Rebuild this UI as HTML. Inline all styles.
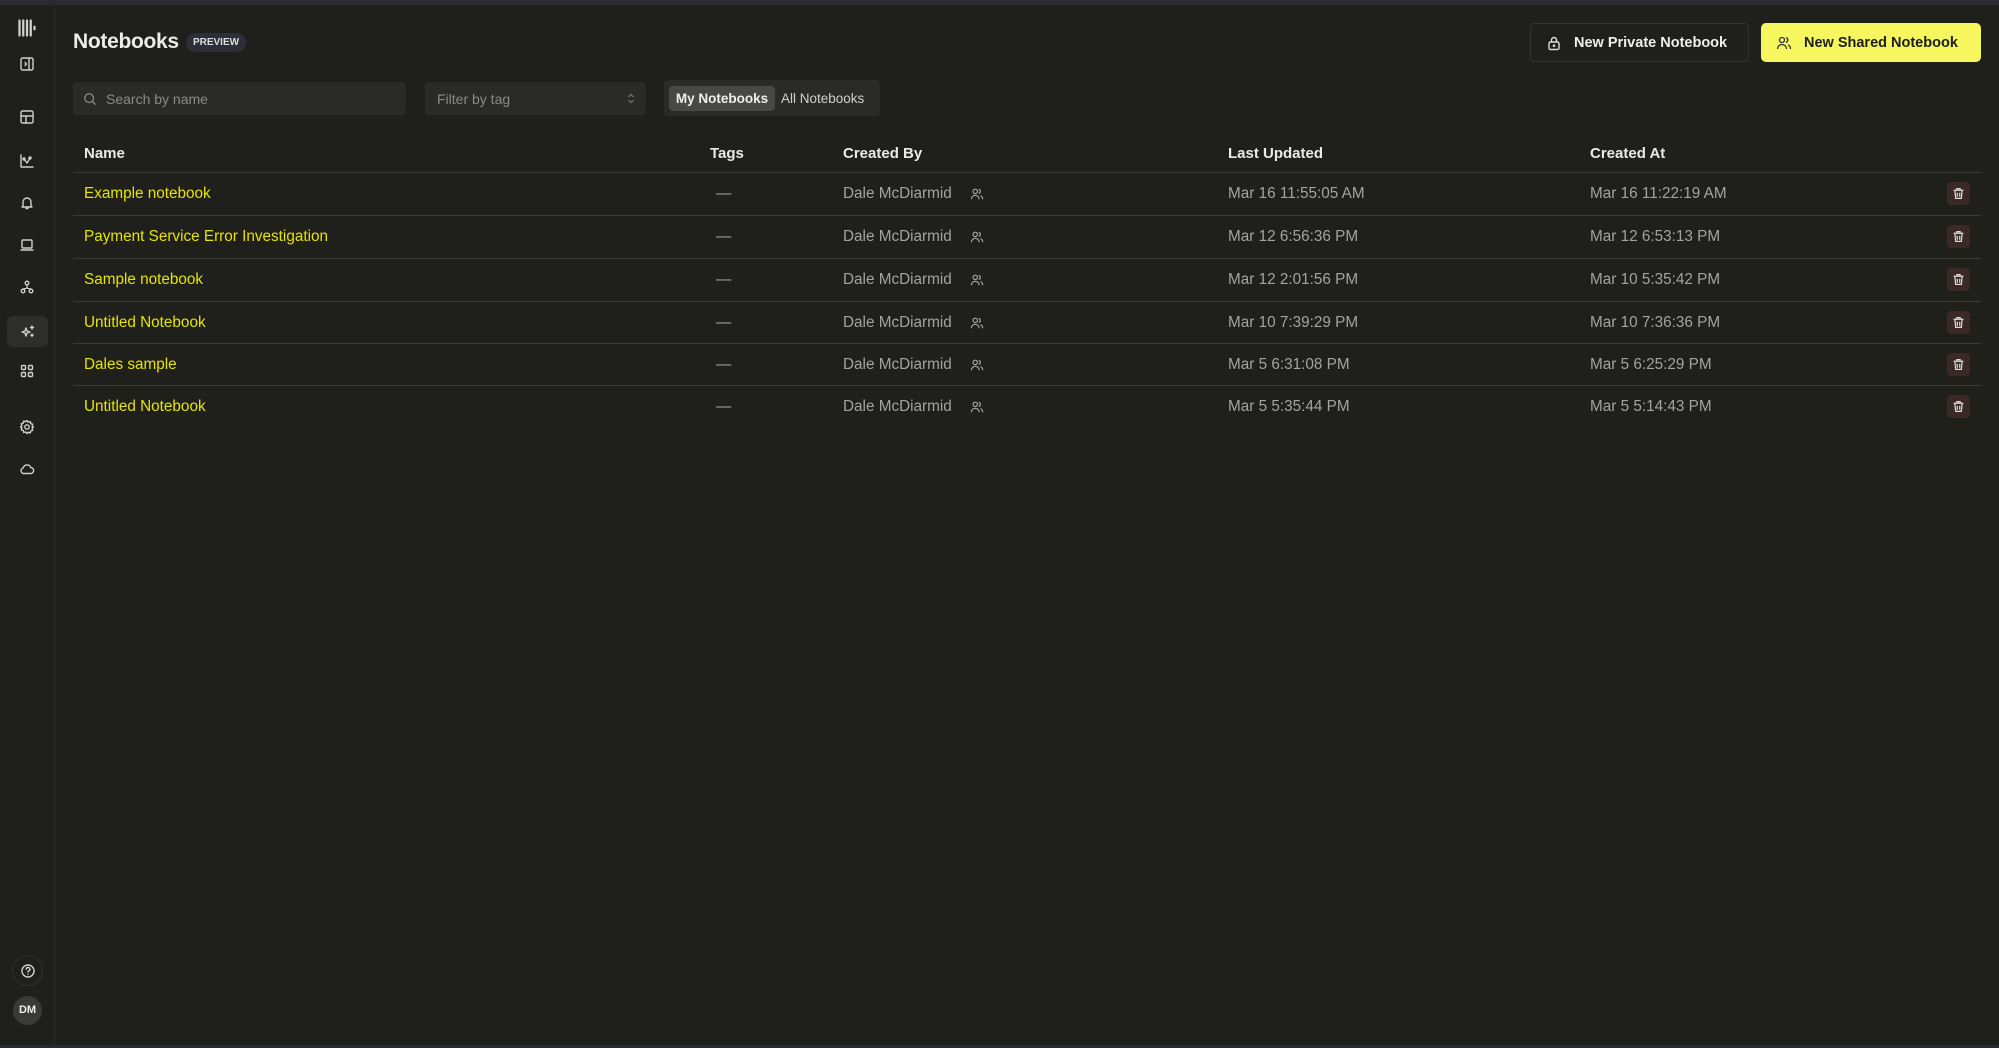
<!DOCTYPE html>
<html><head><meta charset="utf-8"><style>
*{box-sizing:border-box;margin:0;padding:0}
body{width:1999px;height:1048px;background:#1f1f1c;font-family:"Liberation Sans",sans-serif;color:#e8e8e6;position:relative;overflow:hidden}
.top{position:absolute;left:0;top:0;width:1999px;height:5px;background:#2a2a33}
.side{position:absolute;left:0;top:5px;width:55px;height:1040px;border-right:1px solid #2c2c29}
.ic{position:absolute;left:14px;width:26px;height:26px;display:flex;align-items:center;justify-content:center}
.ic svg{width:16px;height:16px;stroke:#cfcfcb;fill:none;stroke-width:1.4;stroke-linecap:round;stroke-linejoin:round}
.abs{position:absolute}
h1{position:absolute;left:73px;top:30px;font-size:21px;font-weight:bold;color:#ececea;letter-spacing:-0.3px}
.badge{position:absolute;left:186px;top:33px;width:60px;height:19px;border-radius:10px;background:#2e2e38;font-size:10px;font-weight:bold;text-align:center;line-height:19px;color:#ddd}
.btn{position:absolute;top:23px;height:39px;border-radius:5px;font-size:14.5px;font-weight:bold;display:flex;align-items:center}
.inp{position:absolute;top:82px;height:33px;background:#2a2a28;border-radius:4px;font-size:14px;color:#8a8a86;display:flex;align-items:center}
.th{position:absolute;top:145px;font-size:15px;font-weight:bold;color:#eaeae8}
.line{position:absolute;left:73px;width:1908px;height:1px;background:#3a3a37}
.row{position:absolute;left:73px;width:1908px;height:42px}
.row span{position:absolute;top:12px;font-size:15.3px;color:#a3a39f}
.row .n{left:11px;color:#e4e400}
.row svg.pp{position:absolute;left:897px;top:14px}
.tr{position:absolute;left:1874px;top:9px;width:23px;height:23px;border-radius:4px;background:#3b2828;display:flex;align-items:center;justify-content:center}
</style></head><body>
<div class="top"></div>
<div class="side">
 <div class="ic" style="top:10px"><svg viewBox="0 0 16 16" style="stroke-width:1.8;width:20px;height:20px"><path d="M2 2v12M5 2v12M8 2v12M11 2v12M14 7v2"/></svg></div>
 <div class="ic" style="top:46px"><svg viewBox="0 0 16 16"><rect x="2" y="2" width="12" height="12" rx="1.5"/><path d="M10 2v12M6 6.5l1.5 1.5L6 9.5"/></svg></div>
 <div class="ic" style="top:99px"><svg viewBox="0 0 16 16"><rect x="2" y="2" width="12" height="12" rx="1.5"/><path d="M2 7h12M7 7v7"/></svg></div>
 <div class="ic" style="top:143px"><svg viewBox="0 0 16 16"><path d="M2 2v12h12M5 6l3 4 3-5"/><circle cx="5" cy="6" r="1"/><circle cx="11" cy="5" r="1"/></svg></div>
 <div class="ic" style="top:185px"><svg viewBox="0 0 16 16"><path d="M4 11V7a4 4 0 0 1 8 0v4l1 1H3zM7 13.5h2"/></svg></div>
 <div class="ic" style="top:227px"><svg viewBox="0 0 16 16"><rect x="3" y="3" width="10" height="8" rx="1"/><path d="M2 13h12"/></svg></div>
 <div class="ic" style="top:269px"><svg viewBox="0 0 16 16"><circle cx="8" cy="4" r="1.8"/><circle cx="4" cy="12" r="1.8"/><circle cx="12" cy="12" r="1.8"/><path d="M8 6v3M4 10l4-1 4 1"/></svg></div>
 <div class="ic" style="top:311px;left:7px;width:41px;height:31px;background:#2d2d2b;border-radius:6px"><svg viewBox="0 0 16 16"><path d="M6 4l1 3 3 1-3 1-1 3-1-3-3-1 3-1z"/><path d="M12 2v3M10.5 3.5h3M12 10v2.5M10.8 11.2h2.4"/></svg></div>
 <div class="ic" style="top:353px"><svg viewBox="0 0 16 16"><rect x="2.5" y="2.5" width="4" height="4" rx="1"/><rect x="9.5" y="2.5" width="4" height="4" rx="1"/><rect x="2.5" y="9.5" width="4" height="4" rx="1"/><rect x="9.5" y="9.5" width="4" height="4" rx="1"/></svg></div>
 <div class="ic" style="top:409px"><svg viewBox="0 0 16 16"><circle cx="8" cy="8" r="2.2"/><path d="M8 1.5l1.3 1.7 2-.6.4 2 2 .6-.6 2L14.5 8l-1.4 1.3.6 2-2 .6-.4 2-2-.6L8 14.5l-1.3-1.6-2 .6-.4-2-2-.6.6-2L1.5 8l1.4-1.3-.6-2 2-.6.4-2 2 .6z"/></svg></div>
 <div class="ic" style="top:451px"><svg viewBox="0 0 16 16"><path d="M4.5 12.5h7a3 3 0 0 0 .3-6A4 4 0 0 0 4.2 7a2.8 2.8 0 0 0 .3 5.5z"/></svg></div>
 <div class="ic" style="top:950px;left:12px;width:31px;height:31px;border:1px solid #2e2e2c;border-radius:50%"><svg viewBox="0 0 16 16"><circle cx="8" cy="8" r="6"/><path d="M6.3 6.3a1.8 1.8 0 1 1 2.3 1.7c-.5.2-.6.6-.6 1.1M8 11.3v.1"/></svg></div>
 <div class="abs" style="top:991px;left:13px;width:29px;height:29px;border-radius:50%;background:#3a3a38;font-size:11px;font-weight:bold;text-align:center;line-height:29px;color:#eee">DM</div>
</div>

<h1>Notebooks</h1>
<div class="badge">PREVIEW</div>

<div class="btn" style="left:1530px;width:219px;border:1px solid #333331;color:#f0f0ee"><svg style="margin-left:15px;margin-right:12px" width="16" height="16" viewBox="0 0 16 16" fill="none" stroke="#ddd" stroke-width="1.4"><rect x="3" y="7" width="10" height="7.5" rx="1.5"/><path d="M5.5 7V5a2.5 2.5 0 0 1 5 0v2"/><circle cx="8" cy="10.7" r=".6" fill="#ddd"/></svg>New Private Notebook</div>
<div class="btn" style="left:1761px;width:220px;background:#f6f65e;color:#1d1d1a"><svg style="margin-left:15px;margin-right:12px" width="16" height="16" viewBox="0 0 16 16" fill="none" stroke="#333" stroke-width="1.3"><circle cx="6" cy="5" r="2.5"/><path d="M1.5 14a4.5 4.5 0 0 1 9 0M10 2.6a2.5 2.5 0 0 1 0 4.8M12 9.8a4.5 4.5 0 0 1 2.5 4.2"/></svg>New Shared Notebook</div>

<div class="inp" style="left:73px;width:333px"><svg style="margin-left:10px;margin-right:9px" width="14" height="14" viewBox="0 0 16 16" fill="none" stroke="#8a8a86" stroke-width="1.5"><circle cx="7" cy="7" r="5"/><path d="M11 11l3.5 3.5"/></svg>Search by name</div>
<div class="inp" style="left:425px;width:221px;padding-left:12px">Filter by tag<svg style="position:absolute;right:11px;top:11px" width="8" height="11" viewBox="0 0 8 11" fill="none" stroke="#777" stroke-width="1.2"><path d="M1.5 4L4 1.5 6.5 4M1.5 7L4 9.5 6.5 7"/></svg></div>
<div class="abs" style="left:664px;top:80px;width:216px;height:36px;background:#2a2a28;border-radius:4px"></div>
<div class="abs" style="left:669px;top:86px;width:106px;height:25px;background:#484846;border-radius:4px;font-size:13.5px;font-weight:bold;color:#eee;text-align:center;line-height:25px">My Notebooks</div>
<div class="abs" style="left:781px;top:86px;font-size:13.5px;color:#cfcfcc;line-height:25px">All Notebooks</div>

<div class="th" style="left:84px">Name</div>
<div class="th" style="left:710px">Tags</div>
<div class="th" style="left:843px">Created By</div>
<div class="th" style="left:1228px">Last Updated</div>
<div class="th" style="left:1590px">Created At</div>
<div class="line" style="top:172px"></div>

<div class="row" style="top:173px"><span class="n">Example notebook</span><span style="left:643px">—</span><span style="left:770px">Dale McDiarmid</span><svg class="pp" width="14" height="14" viewBox="0 0 16 16" fill="none" stroke="#aaa" stroke-width="1.3"><circle cx="6" cy="5" r="2.5"/><path d="M1.5 14a4.5 4.5 0 0 1 9 0M10 2.6a2.5 2.5 0 0 1 0 4.8M12 9.8a4.5 4.5 0 0 1 2.5 4.2"/></svg><span style="left:1155px">Mar 16 11:55:05 AM</span><span style="left:1517px">Mar 16 11:22:19 AM</span><div class="tr"><svg width="13" height="13" viewBox="0 0 16 16" fill="none" stroke="#ddd" stroke-width="1.5"><path d="M2 4h12M6 4V2h4v2M3.5 4l1 10h7l1-10M6.5 7v5M9.5 7v5"/></svg></div></div>
<div class="line" style="top:215px"></div>
<div class="row" style="top:216px"><span class="n">Payment Service Error Investigation</span><span style="left:643px">—</span><span style="left:770px">Dale McDiarmid</span><svg class="pp" width="14" height="14" viewBox="0 0 16 16" fill="none" stroke="#aaa" stroke-width="1.3"><circle cx="6" cy="5" r="2.5"/><path d="M1.5 14a4.5 4.5 0 0 1 9 0M10 2.6a2.5 2.5 0 0 1 0 4.8M12 9.8a4.5 4.5 0 0 1 2.5 4.2"/></svg><span style="left:1155px">Mar 12 6:56:36 PM</span><span style="left:1517px">Mar 12 6:53:13 PM</span><div class="tr"><svg width="13" height="13" viewBox="0 0 16 16" fill="none" stroke="#ddd" stroke-width="1.5"><path d="M2 4h12M6 4V2h4v2M3.5 4l1 10h7l1-10M6.5 7v5M9.5 7v5"/></svg></div></div>
<div class="line" style="top:258px"></div>
<div class="row" style="top:259px"><span class="n">Sample notebook</span><span style="left:643px">—</span><span style="left:770px">Dale McDiarmid</span><svg class="pp" width="14" height="14" viewBox="0 0 16 16" fill="none" stroke="#aaa" stroke-width="1.3"><circle cx="6" cy="5" r="2.5"/><path d="M1.5 14a4.5 4.5 0 0 1 9 0M10 2.6a2.5 2.5 0 0 1 0 4.8M12 9.8a4.5 4.5 0 0 1 2.5 4.2"/></svg><span style="left:1155px">Mar 12 2:01:56 PM</span><span style="left:1517px">Mar 10 5:35:42 PM</span><div class="tr"><svg width="13" height="13" viewBox="0 0 16 16" fill="none" stroke="#ddd" stroke-width="1.5"><path d="M2 4h12M6 4V2h4v2M3.5 4l1 10h7l1-10M6.5 7v5M9.5 7v5"/></svg></div></div>
<div class="line" style="top:301px"></div>
<div class="row" style="top:302px"><span class="n">Untitled Notebook</span><span style="left:643px">—</span><span style="left:770px">Dale McDiarmid</span><svg class="pp" width="14" height="14" viewBox="0 0 16 16" fill="none" stroke="#aaa" stroke-width="1.3"><circle cx="6" cy="5" r="2.5"/><path d="M1.5 14a4.5 4.5 0 0 1 9 0M10 2.6a2.5 2.5 0 0 1 0 4.8M12 9.8a4.5 4.5 0 0 1 2.5 4.2"/></svg><span style="left:1155px">Mar 10 7:39:29 PM</span><span style="left:1517px">Mar 10 7:36:36 PM</span><div class="tr"><svg width="13" height="13" viewBox="0 0 16 16" fill="none" stroke="#ddd" stroke-width="1.5"><path d="M2 4h12M6 4V2h4v2M3.5 4l1 10h7l1-10M6.5 7v5M9.5 7v5"/></svg></div></div>
<div class="line" style="top:343px"></div>
<div class="row" style="top:344px"><span class="n">Dales sample</span><span style="left:643px">—</span><span style="left:770px">Dale McDiarmid</span><svg class="pp" width="14" height="14" viewBox="0 0 16 16" fill="none" stroke="#aaa" stroke-width="1.3"><circle cx="6" cy="5" r="2.5"/><path d="M1.5 14a4.5 4.5 0 0 1 9 0M10 2.6a2.5 2.5 0 0 1 0 4.8M12 9.8a4.5 4.5 0 0 1 2.5 4.2"/></svg><span style="left:1155px">Mar 5 6:31:08 PM</span><span style="left:1517px">Mar 5 6:25:29 PM</span><div class="tr"><svg width="13" height="13" viewBox="0 0 16 16" fill="none" stroke="#ddd" stroke-width="1.5"><path d="M2 4h12M6 4V2h4v2M3.5 4l1 10h7l1-10M6.5 7v5M9.5 7v5"/></svg></div></div>
<div class="line" style="top:385px"></div>
<div class="row" style="top:386px"><span class="n">Untitled Notebook</span><span style="left:643px">—</span><span style="left:770px">Dale McDiarmid</span><svg class="pp" width="14" height="14" viewBox="0 0 16 16" fill="none" stroke="#aaa" stroke-width="1.3"><circle cx="6" cy="5" r="2.5"/><path d="M1.5 14a4.5 4.5 0 0 1 9 0M10 2.6a2.5 2.5 0 0 1 0 4.8M12 9.8a4.5 4.5 0 0 1 2.5 4.2"/></svg><span style="left:1155px">Mar 5 5:35:44 PM</span><span style="left:1517px">Mar 5 5:14:43 PM</span><div class="tr"><svg width="13" height="13" viewBox="0 0 16 16" fill="none" stroke="#ddd" stroke-width="1.5"><path d="M2 4h12M6 4V2h4v2M3.5 4l1 10h7l1-10M6.5 7v5M9.5 7v5"/></svg></div></div>
<div class="abs" style="left:0;top:1045px;width:1999px;height:3px;background:#2a2a33"></div>
</body></html>
